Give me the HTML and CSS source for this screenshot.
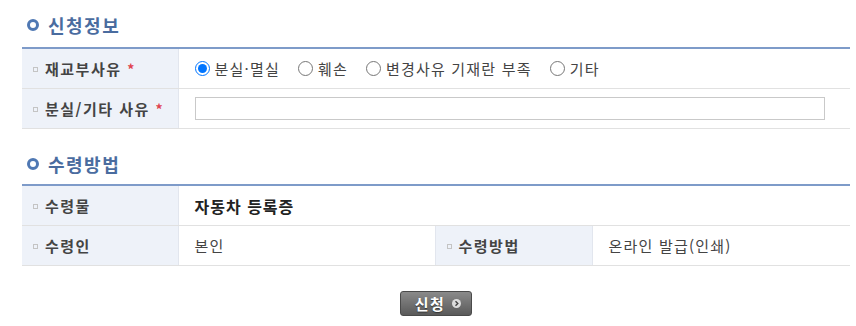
FILE: index.html
```html
<!DOCTYPE html>
<html lang="ko">
<head>
  <meta charset="UTF-8">
  <meta name="viewport" content="width=device-width, initial-scale=1.0">
  <title>재교부 신청</title>
  <link rel="stylesheet" href="styles.css">
</head>
<body>
  <div class="apply-wrap">
    <h3 class="sec-title"><span class="sec-dot"></span>신청정보</h3>
    <table class="form-table">
      <colgroup>
        <col class="col-label">
        <col>
      </colgroup>
      <tr>
        <th><span class="th-bullet"></span>재교부사유 <em class="req">*</em></th>
        <td>
          <div class="radio-list">
            <label class="radio-item"><input type="radio" name="reason" checked>분실·멸실</label>
            <label class="radio-item"><input type="radio" name="reason">훼손</label>
            <label class="radio-item"><input type="radio" name="reason">변경사유 기재란 부족</label>
            <label class="radio-item"><input type="radio" name="reason">기타</label>
          </div>
        </td>
      </tr>
      <tr>
        <th><span class="th-bullet"></span>분실/기타 사유 <em class="req">*</em></th>
        <td><input class="text-input" type="text"></td>
      </tr>
    </table>

    <h3 class="sec-title sec-second"><span class="sec-dot"></span>수령방법</h3>
    <table class="form-table">
      <colgroup>
        <col class="col-label">
        <col class="col-value">
        <col class="col-label2">
        <col>
      </colgroup>
      <tr>
        <th><span class="th-bullet"></span>수령물</th>
        <td colspan="3" class="strong">자동차 등록증</td>
      </tr>
      <tr>
        <th><span class="th-bullet"></span>수령인</th>
        <td>본인</td>
        <th><span class="th-bullet"></span>수령방법</th>
        <td>온라인 발급(인쇄)</td>
      </tr>
    </table>

    <div class="btn-area">
      <button class="btn-apply" type="button">신청
        <span class="btn-arrow">
          <svg width="9" height="9" viewBox="0 0 9 9"><path d="M3.5 2.2 L5.8 4.5 L3.5 6.8" fill="none" stroke="#444" stroke-width="1.4"/></svg>
        </span>
      </button>
    </div>
  </div>
</body>
</html>
```

FILE: styles.css
```css
body {
  margin: 0;
  background: #fff;
  font-family: "Malgun Gothic", "Noto Sans CJK KR", "Noto Sans", sans-serif;
  color: #333;
}
.apply-wrap {
  padding: 15px 6px 10px 22px;
}
.sec-title {
  display: flex;
  align-items: center;
  margin: 0 0 12px 5px;
  height: 20px;
  font-size: 18px;
  font-weight: bold;
  color: #4a6c9f;
  letter-spacing: 1.5px;
}
.sec-second {
  margin-top: 25px;
  margin-bottom: 10px;
}
.sec-dot {
  width: 6px;
  height: 6px;
  border: 3px solid #4f78b3;
  border-radius: 50%;
  margin-right: 9px;
}
.form-table {
  width: 100%;
  table-layout: fixed;
  border-collapse: collapse;
  border-top: 2px solid #7e9bc9;
  font-size: 15px;
  letter-spacing: 1.2px;
}
.col-label { width: 156px; }
.col-value { width: 257px; }
.col-label2 { width: 157px; }
.form-table th,
.form-table td {
  height: 39px;
  padding: 0 16px;
  border-bottom: 1px solid #e1e1e1;
  text-align: left;
  white-space: nowrap;
}
.form-table th {
  background: #eef2f9;
  border-right: 1px solid #e2e6ee;
  padding: 0 0 0 11px;
  font-weight: bold;
  letter-spacing: 1.5px;
  color: #444;
}
.form-table td + th {
  border-left: 1px solid #e2e6ee;
}
.form-table td {
  color: #444;
}
.form-table td.strong {
  font-size: 16px;
  font-weight: bold;
  letter-spacing: 1px;
  color: #222;
}
.th-bullet {
  display: inline-block;
  width: 3px;
  height: 3px;
  border: 1px solid #c4c4c4;
  margin-right: 7px;
  vertical-align: middle;
  position: relative;
  top: -1px;
}
.req {
  font-style: normal;
  color: #e0434f;
  font-size: 14px;
}
.radio-list {
  display: flex;
  align-items: center;
  gap: 18px;
}
.radio-item {
  display: flex;
  align-items: center;
  color: #444;
}
.radio-item input {
  width: 15px;
  height: 15px;
  margin: 0 5px 0 0;
}
.text-input {
  display: block;
  width: 630px;
  height: 23px;
  box-sizing: border-box;
  border: 1px solid #c9c9c9;
  margin: 0;
}
.btn-area {
  display: flex;
  justify-content: center;
  margin-top: 25px;
}
.btn-apply {
  display: flex;
  align-items: center;
  gap: 7px;
  height: 25px;
  padding: 0 10px 0 14px;
  border: 1px solid #4a4a4a;
  border-radius: 3px;
  background: linear-gradient(#8a8a8a, #5a5a5a);
  color: #fff;
  font-family: inherit;
  font-size: 15px;
  font-weight: bold;
  letter-spacing: 1.5px;
  text-shadow: 0 1px 1px #333;
  cursor: pointer;
}
.btn-arrow {
  display: flex;
  width: 9px;
  height: 9px;
  border-radius: 50%;
  background: #ddd;
}
```
